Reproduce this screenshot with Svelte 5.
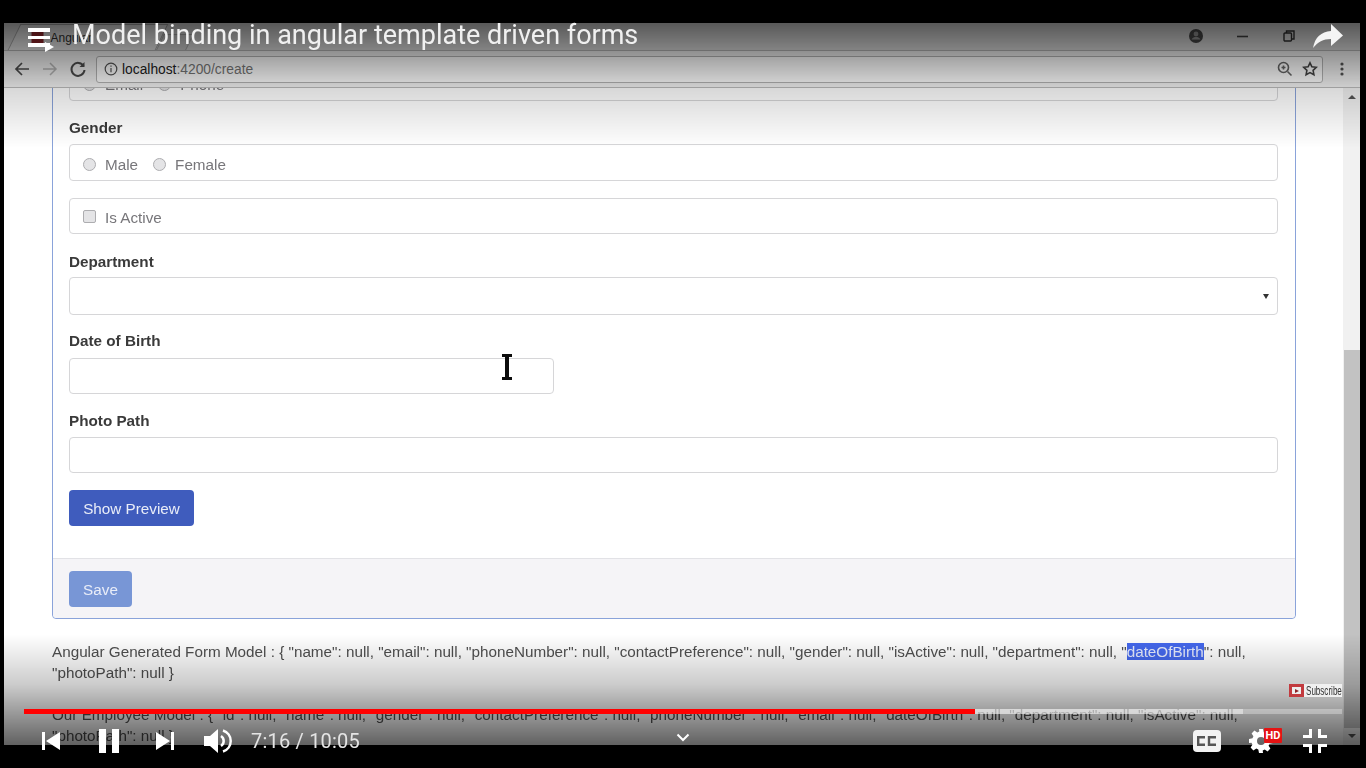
<script>
  const genders = ['Male', 'Female']
  const contacts = ['Email', 'Phone']
</script>

<div class="player">
  <div class="frame">
    <div class="soft">
      <div class="tabstrip">
        <div class="tab">
          <span class="favicon"></span>
          <span class="tabtitle">Angular</span>
        </div>
        <div class="newtab"></div>
        <div class="winctl">
          <svg width="16" height="16" viewBox="0 0 16 16"><circle cx="8" cy="8" r="7" fill="#4a4a4a"/><circle cx="8" cy="6" r="2.4" fill="#9a9a9a"/><path d="M3.6 11.4c1-1.7 2.6-2.3 4.4-2.3s3.400.6 4.400 2.300z" fill="#9a9a9a"/></svg>
          <svg width="14" height="14" viewBox="0 0 14 14"><path d="M1 7.500h11" stroke="#444" stroke-width="1.600"/></svg>
          <svg width="14" height="14" viewBox="0 0 14 14" fill="none" stroke="#333" stroke-width="1.400"><rect x="2" y="4" width="7.500" height="8" rx="1"/><path d="M4.500 4V2h7.500v8h-2.500"/></svg>
        </div>
      </div>

      <div class="toolbar">
        <svg class="nav" width="18" height="18" viewBox="0 0 18 18" fill="none" stroke="#4c4c4c" stroke-width="1.700"><path d="M16 9H3M9 3 3 9l6 6"/></svg>
        <svg class="nav" width="18" height="18" viewBox="0 0 18 18" fill="none" stroke="#b4b4b4" stroke-width="1.500"><path d="M2 9h13M9 3l6 6-6 6"/></svg>
        <svg class="nav" width="18" height="18" viewBox="0 0 18 18" fill="none" stroke="#4c4c4c" stroke-width="2"><path d="M14.600 6A6.500 6.500 0 1 0 15.500 10"/><path d="M15.500 2v5h-5" fill="#4c4c4c" stroke="none"/></svg>
        <div class="omnibox">
          <svg width="14" height="14" viewBox="0 0 14 14" fill="none" stroke="#555" stroke-width="1.200"><circle cx="7" cy="7" r="5.800"/><path d="M7 6v4.200M7 3.500v1.300"/></svg>
          <span class="url"><b>localhost</b>:4200/create</span>
          <svg class="lens" width="16" height="16" viewBox="0 0 16 16" fill="none" stroke="#666" stroke-width="1.600"><circle cx="6.500" cy="6.500" r="5"/><path d="m10.500 10.500 4 4M4.500 6.500h4M6.500 4.500v4"/></svg>
          <svg width="16" height="16" viewBox="0 0 16 16" fill="none" stroke="#444" stroke-width="1.600"><path d="m8 1.800 1.900 4 4.400.5-3.200 3 .8 4.400L8 11.600l-3.900 2.100.8-4.400-3.200-3 4.400-.5z"/></svg>
        </div>
        <svg class="kebab" width="4" height="14" viewBox="0 0 4 14" fill="#555"><circle cx="2" cy="2" r="1.600"/><circle cx="2" cy="7" r="1.600"/><circle cx="2" cy="12" r="1.600"/></svg>
      </div>

      <div class="viewport">
        <div class="page">
          <section class="panel">
            <div class="panel-body">
              <div class="box radios">
                {#each contacts as c}
                  <label class="opt"><input type="radio" name="contact" />{c}</label>
                {/each}
              </div>

              <p class="lbl gender">Gender</p>
              <div class="box radios h37">
                {#each genders as g}
                  <label class="opt"><input type="radio" name="gender" />{g}</label>
                {/each}
              </div>

              <div class="box radios active">
                <label class="opt"><input type="checkbox" />Is Active</label>
              </div>

              <p class="lbl dept">Department</p>
              <div class="box h38 select"><span class="caret"></span></div>

              <p class="lbl dob">Date of Birth</p>
              <div class="box short"></div>

              <p class="lbl photo">Photo Path</p>
              <div class="box"></div>

              <button class="btn preview">Show Preview</button>
            </div>
            <div class="panel-footer">
              <button class="btn save">Save</button>
            </div>
          </section>

          <p class="model">Angular Generated Form Model : &#123; "name": null, "email": null, "phoneNumber": null, "contactPreference": null, "gender": null, "isActive": null, "department": null, "<mark>dateOfBirth</mark>": null, "photoPath": null &#125;</p>
          <p class="model second">Our Employee Model : &#123; "id": null, "name": null, "gender": null, "contactPreference": null, "phoneNumber": null, "email": null, "dateOfBirth": null, "department": null, "isActive": null, "photoPath": null &#125;</p>
        </div>

        <div class="scrollbar">
          <span class="arrow up"></span>
          <div class="thumb"></div>
          <span class="arrow down"></span>
        </div>
      </div>
    </div>

    <div class="shade top"></div>
    <div class="shade bottom"></div>
  </div>

  <!-- player chrome sits over the video -->
  <svg class="ibeam" width="10" height="26" viewBox="0 0 10 26" fill="#0c0c0c"><path d="M0 0h10v3H7v20h3v3H0v-3h3V3H0z"/></svg>

  <div class="menu">
    <span></span><span></span><span></span>
    <i class="tri"></i>
  </div>
  <h1 class="title">Model binding in angular template driven forms</h1>
  <svg class="share" width="32" height="26" viewBox="0 0 32 26"><path d="M1 25C3 14 9 9 19 8V1l12 11.500L19 23v-7C11 16 6 19 1 25z" fill="#f4f4f4"/></svg>

  <div class="subscribe">
    <span class="sub-ico"><i></i></span>
    <span class="sub-txt">Subscribe</span>
  </div>

  <div class="progress">
    <div class="played"></div>
    <div class="buffered"></div>
    <div class="rest"></div>
  </div>

  <div class="controls">
    <svg class="ctl prev" width="18" height="18" viewBox="0 0 18 18" fill="#fff"><path d="M0 0h3v18H0zM18 0v18L4 9z"/></svg>
    <svg class="ctl pause" width="20" height="24" viewBox="0 0 20 24" fill="#fff"><path d="M0 0h7v24H0zM13 0h7v24h-7z"/></svg>
    <svg class="ctl next" width="18" height="18" viewBox="0 0 18 18" fill="#fff"><path d="M0 0l14 9L0 18zM15 0h3v18h-3z"/></svg>
    <svg class="ctl vol" width="28" height="26" viewBox="0 0 28 26"><path d="M0 8h6l8-7v24l-8-7H0z" fill="#fff"/><path d="M17 8a6 6 0 0 1 0 10" fill="none" stroke="#fff" stroke-width="2.500"/><path d="M19 2.500a11 11 0 0 1 0 21" fill="none" stroke="#fff" stroke-width="2.500"/></svg>
    <span class="time">7:16 / 10:05</span>
    <svg class="chev" width="14" height="9" viewBox="0 0 14 9" fill="none" stroke="#fff" stroke-width="2"><path d="m1.500 1.500 5.500 5.500 5.500-5.500"/></svg>
    <div class="cc">
      <svg width="20" height="10" viewBox="0 0 20 10" fill="none" stroke="#555" stroke-width="2.400"><path d="M8 1.200H1.200v7.600H8M19 1.200h-7v7.600h7"/></svg>
    </div>
    <div class="gear">
      <svg width="24" height="24" viewBox="0 0 24 24"><path fill="#fff" fill-rule="evenodd" d="M10 0h4l.7 3.300 2 .9 2.900-1.800 2.800 2.800-1.800 2.900.9 2L24 10v4l-3.500.7-.9 2 1.800 2.900-2.800 2.800-2.900-1.800-2 .9L14 24h-4l-.7-3.500-2-.9-2.900 1.800-2.800-2.800 1.800-2.900-.9-2L0 14v-4l3.500-.7.900-2-1.800-2.900 2.800-2.800 2.900 1.800 2-.9zM12 8a4 4 0 1 0 0 8 4 4 0 0 0 0-8z"/></svg>
      <span class="hd">HD</span>
    </div>
    <svg class="ctl exit" width="24" height="24" viewBox="0 0 24 24" fill="#fff"><path d="M6 0h3v9H0V6h6zM15 0h3v6h6v3h-9zM0 15h9v9H6v-6H0zM15 15h9v3h-6v6h-3z"/></svg>
  </div>
</div>

<style>
  :global(body) {
    background: #000;
    font-family: "Liberation Sans", Arial, sans-serif;
  }

  .player {
    position: relative;
    width: 1366px;
    height: 768px;
    overflow: hidden;
    background: #000;
    padding-top: 23px;
    box-sizing: border-box;
  }

  .frame {
    position: relative;
    width: 1356px;
    height: 722px;
    margin-left: 4px;
    overflow: hidden;
    background: #fff;
  }

  .soft {
    height: 100%;
    display: flex;
    flex-direction: column;
    filter: blur(0.6px);
  }

  /* browser window */
  .tabstrip {
    height: 28px;
    flex: none;
    display: flex;
    align-items: flex-end;
    background: #dedede;
    border-bottom: 1px solid #b8b8b8;
    box-sizing: border-box;
    padding-left: 10px;
  }

  .tab {
    width: 148px;
    height: 26px;
    display: flex;
    align-items: center;
    gap: 7px;
    padding-left: 17px;
    box-sizing: border-box;
    background: #ececec;
    border: 1px solid #a8a8a8;
    border-bottom: 0;
    transform: skewX(-26deg);
  }

  .favicon {
    width: 12px;
    height: 12px;
    background: #9c2a30;
    flex: none;
    transform: skewX(26deg);
  }

  .tabtitle {
    font-size: 12px;
    color: #333;
    transform: skewX(26deg);
  }

  .newtab {
    width: 28px;
    height: 15px;
    background: #d2d2d2;
    border: 1px solid #aaa;
    border-bottom: 0;
    margin-left: -2px;
    transform: skewX(-26deg);
  }

  .winctl {
    margin-left: auto;
    height: 26px;
    display: flex;
    align-items: center;
    gap: 32px;
    margin-right: 64px;
    padding-bottom: 1px;
  }

  .toolbar {
    height: 37px;
    flex: none;
    display: flex;
    align-items: center;
    background: #f2f2f2;
    border-bottom: 1px solid #bdbdbd;
    box-sizing: border-box;
    padding-left: 9px;
  }

  .nav {
    margin-right: 10px;
    flex: none;
  }

  .omnibox {
    width: 1227px;
    height: 27px;
    margin-left: -1px;
    display: flex;
    align-items: center;
    box-sizing: border-box;
    padding: 0 4px 0 7px;
    gap: 5px;
    background: #fff;
    border: 1px solid #b5b5b5;
    border-radius: 3px;
  }

  .url {
    font-size: 13.8px;
    color: #777;
    flex: 1;
    margin-left: -1px;
  }

  .url b {
    font-weight: normal;
    color: #222;
  }

  .lens {
    margin-right: 4px;
  }

  .kebab {
    margin-left: 17px;
  }

  .viewport {
    flex: 1;
    min-height: 0;
    display: flex;
    overflow: hidden;
  }

  .page {
    flex: 1;
    min-width: 0;
    padding-left: 48px;
  }

  /* form */
  .panel {
    width: 1244px;
    box-sizing: border-box;
    margin-top: -24px;
    border: 1px solid #8aa3da;
    border-radius: 4px;
    background: #fff;
  }

  .panel-body {
    padding: 0 17px 32px 16px;
  }

  .box {
    height: 36px;
    box-sizing: border-box;
    border: 1px solid #d6d6d8;
    border-radius: 4px;
    background: #fff;
  }

  .h37 { height: 37px; }
  .h38 { height: 38px; }
  .short { width: 485px; }

  .radios {
    display: flex;
    align-items: center;
    padding: 3px 0 0 13px;
    gap: 15px;
  }

  .active { margin-top: 17px; }

  .opt {
    display: flex;
    align-items: center;
    gap: 9px;
    font-size: 15.25px;
    color: #77767a;
  }

  .opt input {
    appearance: none;
    width: 13px;
    height: 13px;
    margin: 0;
    background: #e4e4e6;
    border: 1px solid #adadb0;
    border-radius: 50%;
  }

  .opt input[type="checkbox"] {
    border-radius: 2px;
    margin-top: -2px;
  }

  .lbl {
    margin: 0;
    font-size: 15.25px;
    line-height: 20px;
    font-weight: bold;
    color: #3a3a3a;
  }

  .gender { margin-top: 17px; margin-bottom: 6px; }
  .dept { margin-top: 18px; margin-bottom: 5px; }
  .dob { margin-top: 16px; margin-bottom: 7px; }
  .photo { margin-top: 17px; margin-bottom: 6px; }

  .select {
    display: flex;
    align-items: center;
    justify-content: flex-end;
    padding-right: 8px;
  }

  .caret {
    width: 0;
    height: 0;
    border-left: 3px solid transparent;
    border-right: 3px solid transparent;
    border-top: 5px solid #333;
  }

  .btn {
    display: block;
    height: 36px;
    padding: 0;
    font: 15.25px "Liberation Sans", Arial, sans-serif;
    color: #e9edf8;
    border: 1px solid transparent;
    border-radius: 4px;
  }

  .preview {
    width: 125px;
    margin-top: 17px;
    background: #3f5cbd;
  }

  .save {
    width: 63px;
    background: #7896d6;
  }

  .panel-footer {
    height: 60px;
    box-sizing: border-box;
    padding: 12px 16px 0;
    background: #f5f4f7;
    border-top: 1px solid #e2e2e6;
    border-radius: 0 0 4px 4px;
  }

  .model {
    margin: 22px 0 0;
    width: 1244px;
    font-size: 15.25px;
    line-height: 21px;
    color: #505050;
  }

  .second { margin-top: 21px; }

  mark {
    background: #4569ee;
    color: #e8edff;
  }

  /* page scrollbar */
  .scrollbar {
    width: 17px;
    flex: none;
    display: flex;
    flex-direction: column;
    align-items: center;
    justify-content: space-between;
    background: #f1f1f1;
    position: relative;
  }

  .thumb {
    position: absolute;
    left: 1px;
    right: 0;
    top: 262px;
    height: 378px;
    background: #c2c2c2;
  }

  .arrow {
    width: 0;
    height: 0;
    margin: 7px 0;
    border-left: 4px solid transparent;
    border-right: 4px solid transparent;
  }

  .up { border-bottom: 4px solid #555; }
  .down { border-top: 4px solid #555; }

  /* video overlay */
  .shade {
    position: absolute;
    left: 0;
    right: 0;
    pointer-events: none;
  }

  .shade.top {
    top: 0;
    height: 125px;
    background: linear-gradient(rgba(0, 0, 0, 0.6), rgba(0, 0, 0, 0.16) 50%, rgba(0, 0, 0, 0));
  }

  .shade.bottom {
    bottom: 0;
    height: 110px;
    background: linear-gradient(rgba(0, 0, 0, 0), rgba(0, 0, 0, 0.2) 45%, rgba(0, 0, 0, 0.62));
  }

  .ibeam {
    position: absolute;
    left: 502px;
    top: 354px;
  }

  .menu {
    position: absolute;
    left: 28px;
    top: 28px;
    width: 22px;
    display: flex;
    flex-direction: column;
    gap: 4px;
  }

  .menu span {
    height: 3.500px;
    background: #fff;
  }

  .tri {
    position: absolute;
    left: 17px;
    top: 14px;
    border-left: 9px solid #fff;
    border-top: 5px solid transparent;
    border-bottom: 5px solid transparent;
  }

  .title {
    position: absolute;
    left: 72px;
    top: 18px;
    margin: 0;
    font: 400 27px/34px Roboto, sans-serif;
    color: #f0f0f0;
    white-space: nowrap;
  }

  .share {
    position: absolute;
    left: 1312px;
    top: 23px;
  }

  .subscribe {
    position: absolute;
    left: 1289px;
    top: 684px;
    width: 53px;
    height: 13px;
    display: flex;
    align-items: center;
    gap: 2px;
    background: #f0f0f0;
  }

  .sub-ico {
    width: 15px;
    height: 13px;
    flex: none;
    box-sizing: border-box;
    border: 3px solid #c23b3f;
    display: flex;
    align-items: center;
    justify-content: center;
    background: #eee;
  }

  .sub-ico i {
    border-left: 4px solid #8c2528;
    border-top: 2.500px solid transparent;
    border-bottom: 2.500px solid transparent;
  }

  .sub-txt {
    font: 13px "Liberation Sans", Arial, sans-serif;
    color: #333;
    display: inline-block;
    transform: scaleX(0.62);
    transform-origin: left center;
    white-space: nowrap;
  }

  .progress {
    position: absolute;
    left: 24px;
    top: 709px;
    width: 1318px;
    height: 5px;
    display: flex;
  }

  .played { width: 951px; background: #f00; }
  .buffered { width: 268px; background: rgba(255, 255, 255, 0.6); }
  .rest { flex: 1; background: rgba(255, 255, 255, 0.3); }

  .controls {
    position: absolute;
    left: 0;
    top: 727px;
    width: 1366px;
    height: 28px;
    display: flex;
    align-items: center;
    color: #fff;
  }

  .prev { margin-left: 42px; }
  .pause { margin-left: 39px; }
  .next { margin-left: 37px; }
  .vol { margin-left: 30px; }

  .time {
    margin-left: 19px;
    width: 110px;
    font: 20px Roboto, sans-serif;
    color: #e4e4e4;
    letter-spacing: 0.2px;
    white-space: nowrap;
  }

  .chev {
    margin-left: 315px;
    margin-bottom: 8px;
  }

  .cc {
    margin-left: 503px;
    width: 28px;
    height: 22px;
    display: flex;
    align-items: center;
    justify-content: center;
    background: #f2f2f2;
    border-radius: 4px;
  }

  .gear {
    position: relative;
    margin-left: 28px;
    width: 24px;
    height: 24px;
  }

  .hd {
    position: absolute;
    left: 15px;
    top: -1px;
    width: 18px;
    height: 15px;
    background: #e51313;
    border-radius: 1px;
    color: #fff;
    font: bold 11px/15px Roboto, sans-serif;
    text-align: center;
  }

  .exit { margin-left: 30px; }
</style>
